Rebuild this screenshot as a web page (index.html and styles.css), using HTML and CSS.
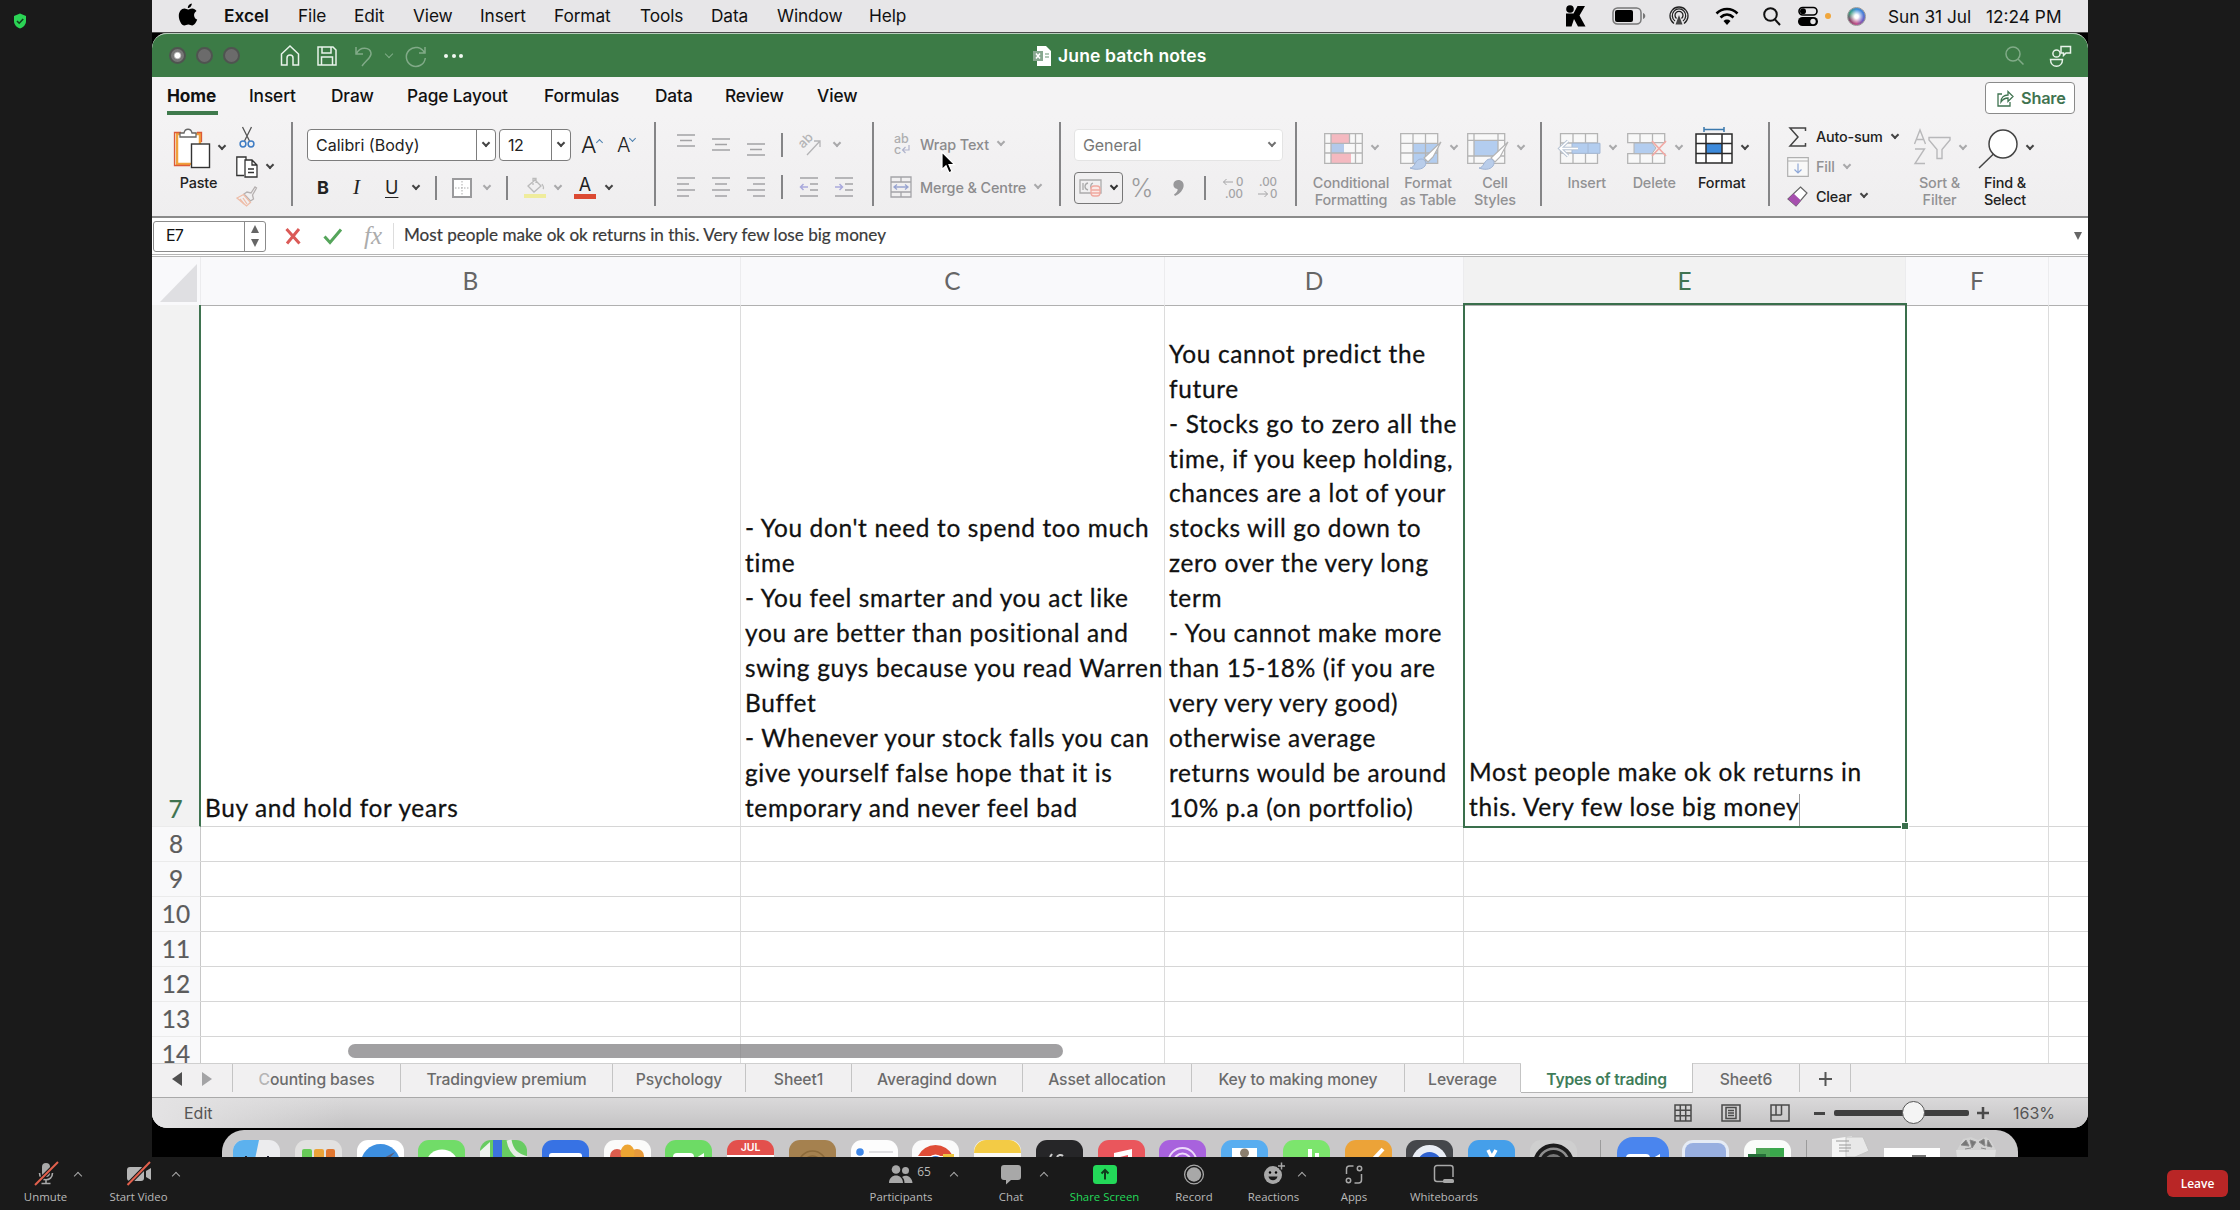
FILE: index.html
```
<!DOCTYPE html>
<html>
<head>
	<meta charset="utf-8">
	<title>June batch notes</title>
	<link rel="stylesheet" href="styles.css">
</head>
<body>
	<section class="stage">
		<svg class="shield" width="14" height="16" viewBox="0 0 14 16"><path d="M7 0.5L13 3v5c0 4-3 6.500-6 7.500C4 14.500 1 12 1 8V3z" fill="#2bd455"/><path d="M4 8l2.200 2.200L10.200 6" fill="none" stroke="#12401e" stroke-width="1.600"/></svg>

		<div class="screen">
			<!-- mac menu bar -->
			<div class="menubar">
				<div class="menus">
					<svg width="20" height="24" viewBox="0 0 20 24"><path d="M13.800 0.500c.2 2.200-1.700 4.600-3.900 4.500C9.600 2.900 11.700.7 13.800.5zM10 6.600c1.200 0 2.300-1.100 4.200-1.100 1.700 0 3.300.9 4.300 2.400-3.600 2.200-3 7.200.7 8.700-.9 2.500-2.900 5.900-5 5.900-1.500 0-2-.9-3.900-.9s-2.500.9-3.900.9C3.500 22.500.8 17 .8 12.900c0-4.200 2.600-7.300 5.600-7.300 1.500 0 2.500 1 3.600 1z"/></svg>
					<b>Excel</b><span>File</span><span>Edit</span><span>View</span><span>Insert</span><span>Format</span><span>Tools</span><span>Data</span><span>Window</span><span>Help</span>
				</div>
				<div class="status">
					<svg width="21" height="22" viewBox="0 0 21 22"><circle cx="5" cy="4" r="3.800"/><path d="M1 8.500h7.500L12.500 1H20l-5.500 9.500 6 11h-7.500L9 14l-2.500 7.500H1z"/></svg>
					<svg width="34" height="18" viewBox="0 0 34 18"><rect x="1" y="1" width="28" height="16" rx="4.500" fill="none" stroke="#777" stroke-width="1.500"/><rect x="3" y="3" width="18" height="12" rx="2"/><path d="M31 6c3 1 3 5 0 6z" fill="#777"/></svg>
					<svg width="20" height="22" viewBox="0 0 20 22" fill="none" stroke="#222" stroke-width="1.300"><path d="M5 18.500a9 9 0 1 1 10 0M6 16a6.700 6.700 0 1 1 8 0M7.500 13.500a4 4 0 1 1 5 0"/><path d="M10 10l3.500 9.500h-7z" fill="#444" stroke="none"/></svg>
					<svg width="24" height="19" viewBox="0 0 24 19" fill="none" stroke="#000" stroke-width="2.600"><path d="M1.500 6.500C7.500.5 16.500.5 22.500 6.500M5.500 10.500c4-3.800 9-3.800 13 0"/><path d="M8.500 14a5 5 0 0 1 7 0L12 18z" fill="#000" stroke="none"/></svg>
					<svg width="18" height="19" viewBox="0 0 18 19" fill="none" stroke="#111" stroke-width="2"><circle cx="7.500" cy="7.500" r="6.300"/><path d="M12 12.500l5 5.500"/></svg>
					<svg width="20" height="20" viewBox="0 0 20 20"><rect x="1" y="1.500" width="18" height="7.500" rx="3.700" fill="none" stroke="#000" stroke-width="1.600"/><circle cx="5" cy="5.200" r="3"/><rect x="0" y="11" width="20" height="9" rx="4.500"/><circle cx="15" cy="15.500" r="2.700" fill="#e7e6e8"/></svg>
					<i class="orange-dot"></i>
					<i class="siri"></i>
					<span>Sun 31 Jul</span><span>12:24 PM</span>
				</div>
			</div>

			<div class="window">
				<!-- title bar -->
				<div class="titlebar">
					<div class="quick">
						<i class="light on"></i><i class="light"></i><i class="light"></i>
						<svg class="q-home" width="20" height="21" viewBox="0 0 20 21"><path d="M1.500 9L10 1l8.500 8v11H13v-7a3 3 0 0 0-6 0v7H1.500z"/></svg>
						<svg class="q-save" width="20" height="20" viewBox="0 0 20 20"><path d="M1 1h15l3 3v15H1zM5 1v6h9V1M4.500 19v-8h11v8"/></svg>
						<svg class="q-undo dim" width="18" height="22" viewBox="0 0 18 22"><path d="M1 2v7h7M1.500 8.500C5 1 15 2 16 8c.7 4-3.500 6-9 13"/></svg>
						<i class="chev light-chev"></i>
						<svg class="q-redo dim" width="22" height="22" viewBox="0 0 22 22"><path d="M20 2v6h-6M19.500 8a9.500 9.500 0 1 0 .8 5"/></svg>
						<span class="dots"><i></i><i></i><i></i></span>
					</div>
					<div class="doc">
						<svg width="18" height="20" viewBox="0 0 18 20"><path d="M4 0h9l5 5v15H4z" fill="#fff"/><rect x="0" y="5" width="10" height="10" fill="#88a890"/><path d="M3 7.500l4 5M7 7.500l-4 5" stroke="#fff"/><path d="M12 8h4M12 11h4" stroke="#9ab8a2"/></svg>
						June batch notes
					</div>
					<div class="title-right">
						<svg class="dim" width="19" height="19" viewBox="0 0 19 19"><circle cx="8" cy="8" r="7"/><path d="M13 13l5.500 5.500"/></svg>
						<svg width="23" height="22" viewBox="0 0 23 22"><circle cx="7.500" cy="8.500" r="3.600"/><path d="M1.500 14.500h12c0 9-12 9-12 0zM12 1.500h9.500V8H17l-2.500 2.500V8H12z"/></svg>
					</div>
				</div>

				<!-- ribbon tabs -->
				<div class="tabs">
					<div class="tab-list">
						<span class="current">Home</span><span>Insert</span><span>Draw</span><span>Page Layout</span><span>Formulas</span><span>Data</span><span>Review</span><span>View</span>
					</div>
					<div class="share">
						<svg width="17" height="17" viewBox="0 0 17 17" fill="none" stroke="#3f7350" stroke-width="1.300"><path d="M5 4H1v12h12v-4M4 12c0-5 3-7 7-7V1.500l5 5-5 5V8c-3 0-5 1-7 4z"/></svg>
						Share
					</div>
				</div>

				<!-- ribbon -->
				<div class="ribbon">
					<div class="group clipboard">
						<div class="big paste">
							<div class="pic"><svg width="38" height="42" viewBox="0 0 38 42"><path d="M4 7h23v30H4z" fill="#fff" stroke="#f0a13c" stroke-width="2.500"/><path d="M8 5.500H1.500v33H17M24 5.500h4.500V15" fill="none" stroke="#dd5a37" stroke-width="1.300"/><path d="M7 10V6h4c1-5 7-5 8 0h4v4z" fill="#fff" stroke="#666" stroke-width="1.300"/><rect x="18.500" y="17" width="18" height="23.500" fill="#fff" stroke="#333" stroke-width="1.400"/></svg><i class="chev"></i></div>
							<p>Paste</p>
						</div>
						<div class="clips">
							<svg width="16" height="22" viewBox="0 0 16 22" fill="none"><path d="M3.500 1l7 14M12.500 1l-7 14" stroke="#555" stroke-width="1.300"/><circle cx="4" cy="18" r="2.900" stroke="#3f7dc4" stroke-width="1.500"/><circle cx="12" cy="18" r="2.900" stroke="#3f7dc4" stroke-width="1.500"/></svg>
							<div class="copy"><svg width="22" height="22" viewBox="0 0 22 22" fill="#fff" stroke="#333" stroke-width="1.300"><path d="M8 19.500H.8V1H10v3"/><path d="M9 4h7l5 5v12H9zM16 4v5h5M12 13h6M12 16.500h6"/></svg><i class="chev"></i></div>
							<svg width="21" height="21" viewBox="0 0 21 21" fill="none" stroke-width="1.300"><path d="M8 8l3-2 4 1 4-6 1.500 1-4 7 1 4-3 2z" stroke="#b5b0b0"/><path d="M7.500 8.500l7 8-4 3.500L1 12z" stroke="#eebda8"/><path d="M4 13l4 5M7 12l4 6" stroke="#eebda8"/></svg>
						</div>
					</div>

					<div class="group font">
						<div class="frow combos">
							<div class="combo name"><span>Calibri (Body)</span><i class="chev"></i></div>
							<div class="combo size"><span>12</span><i class="chev"></i></div>
							<span class="grow">A<i class="chev up"></i></span>
							<span class="grow small">A<i class="chev"></i></span>
						</div>
						<div class="frow styles">
							<b>B</b><em>I</em><u>U</u><i class="chev"></i><i class="bar"></i>
							<svg width="20" height="20" viewBox="0 0 20 20" fill="none"><rect x="1" y="1" width="18" height="18" fill="#fff" stroke="#9a9a9c" stroke-width="2"/><path d="M10 3v14M3 10h14" stroke="#aaa" stroke-dasharray="1.500 1.500"/></svg>
							<i class="chev off"></i><i class="bar"></i>
							<svg width="22" height="22" viewBox="0 0 22 22" fill="none" stroke="#bbb" stroke-width="1.300"><path d="M4 9l7-6 6 6-7 6zM9 8V1.500h3V6M18 7c2 3 2 4 1 5"/><path d="M0 19h22" stroke="#efec9c" stroke-width="4"/></svg>
							<i class="chev off"></i>
							<span class="fcolor">A</span><i class="chev"></i>
						</div>
					</div>

					<div class="group align">
						<div class="arow">
							<svg class="lines" width="20" height="22" viewBox="0 0 20 22"><path d="M1 1h18M4 6.500h12M1 12h18"/></svg>
							<svg class="lines" width="20" height="22" viewBox="0 0 20 22"><path d="M1 5h18M4 10.500h12M1 16h18"/></svg>
							<svg class="lines" width="20" height="22" viewBox="0 0 20 22"><path d="M1 10h18M4 15.500h12M1 21h18"/></svg>
							<i class="bar"></i>
							<svg width="24" height="22" viewBox="0 0 24 22" fill="none" stroke="#b4b4b6" stroke-width="1.300"><path d="M8 21L21 7M15 7h6v6"/><text x="4" y="15" transform="rotate(-45 4 15)" font-family="Inter, sans-serif" font-size="13" fill="#b4b4b6" stroke="none">ab</text></svg>
							<i class="chev off"></i>
						</div>
						<div class="arow second">
							<svg class="lines" width="20" height="20" viewBox="0 0 20 20"><path d="M1 1h18M1 7h12M1 13h18M1 19h12"/></svg>
							<svg class="lines" width="20" height="20" viewBox="0 0 20 20"><path d="M1 1h18M4 7h12M1 13h18M4 19h12"/></svg>
							<svg class="lines" width="20" height="20" viewBox="0 0 20 20"><path d="M1 1h18M7 7h12M1 13h18M7 19h12"/></svg>
							<i class="bar"></i>
							<svg class="lines" width="20" height="20" viewBox="0 0 20 20"><path d="M1 1h18M11 7h8M11 13h8M1 19h18"/><path d="M9 10H1.500M4.500 7l-3 3 3 3" stroke="#a9a9dc"/></svg>
							<svg class="lines" width="20" height="20" viewBox="0 0 20 20"><path d="M1 1h18M11 7h8M11 13h8M1 19h18"/><path d="M1 10h7.500M5.500 7l3 3-3 3" stroke="#a9a9dc"/></svg>
						</div>
					</div>

					<div class="group wrap">
						<div class="wrow">
							<svg width="22" height="22" viewBox="0 0 22 22"><g font-family="Inter, sans-serif" font-size="12.500" fill="#aeaeb0"><text x="4" y="10">ab</text><text x="4" y="21">c</text></g><path d="M19 12v5h-6M15.500 14l-3 3 3 3" fill="none" stroke="#b0b4cc" stroke-width="1.200"/></svg>
							<span>Wrap Text</span><i class="chev off"></i>
						</div>
						<div class="wrow second">
							<svg width="22" height="22" viewBox="0 0 22 22" fill="none" stroke="#a4a4a8" stroke-width="1.300"><path d="M1 1h20v20H1zM1 6h20M1 16h20M11 1v5M11 16v5"/><path d="M4 11h14M7 8.500L4 11l3 2.500M15 8.500l3 2.500-3 2.500" stroke="#98a4d0"/></svg>
							<span>Merge &amp; Centre</span><i class="chev off"></i>
						</div>
						<svg class="pointer" width="15" height="23" viewBox="0 0 15 23"><path d="M1 1v17.500l4-3.800 3 7 3-1.300-3-6.700h5.500z" stroke="#fff" stroke-width="1.200"/></svg>
					</div>

					<div class="group number">
						<div class="general"><span>General</span><i class="chev"></i></div>
						<div class="nrow">
							<div class="money"><svg width="24" height="20" viewBox="0 0 24 20" fill="none" stroke="#aaa" stroke-width="1.300"><path d="M1 2h21v13H1zM4 5v7M9 5c-4 1-4 6 0 7M14 5c-3 1-3 6 0 7"/><g stroke="#f0a9a0" fill="#fbe9e6"><rect x="12" y="8" width="9" height="10" rx="3"/><path d="M12 12h9M12 15h9"/></g></svg><i class="chev"></i></div>
							<span class="pct">%</span>
							<svg class="comma" width="11" height="16" viewBox="0 0 11 16"><path d="M5 0c8 0 8 11-3 16l-1-1.500c3-2 4-4 3.500-5.500C-1 9-1 0 5 0z" fill="#98989a"/></svg>
							<i class="bar"></i>
							<svg width="24" height="22" viewBox="0 0 24 22"><g font-family="Inter, sans-serif" font-size="11.500" fill="#a4a4a6"><text x="14" y="9">0</text><text x="3" y="21">.00</text></g><path d="M11 5H1.500M4.500 2l-3 3 3 3" fill="none" stroke="#a4a4a6"/></svg>
							<svg width="24" height="22" viewBox="0 0 24 22"><g font-family="Inter, sans-serif" font-size="11.500" fill="#a4a4a6"><text x="2" y="9">.00</text><text x="13" y="21">0</text></g><path d="M1 17h9.500M7.500 14l3 3-3 3" fill="none" stroke="#a4a4a6"/></svg>
						</div>
					</div>

					<div class="group formats">
						<div class="big off w84">
							<div class="pic"><svg width="39" height="31" viewBox="0 0 39 31"><rect x=".7" y=".7" width="37.600" height="29.600" fill="#f8f8f8"/><path d="M7 1h18v9H7zM7 20h20v10H7z" fill="#f4b9c0"/><path d="M7 10h13v10H7z" fill="#b3c9ea"/><path d="M.7.7h37.600v29.600H.7zM.7 10.300h37.600M.7 20h37.600M7 .7v29.600M31.500.7v29.600M25.500.7v9.600" fill="none" stroke="#b4b4b4" stroke-width="1.300"/></svg><i class="chev off"></i></div>
							<p>Conditional<br>Formatting</p>
						</div>
						<div class="big off w70">
							<div class="pic"><svg width="42" height="37" viewBox="0 0 42 37"><path d="M.7.700h37v29.600H.7z" fill="#f8f8f8"/><path d="M13 10.300h24.500v20H13z" fill="#b3cdef"/><path d="M.7.7h37v29.600H.7zM.7 10.300h37M.7 20h37M13 .7v29.600M25.500.7v29.600" fill="none" stroke="#b4b4b4" stroke-width="1.300"/><path d="M41 9L24 25l4 4 5-5z" fill="#fff" stroke="#b4b4b4" stroke-width="1.200"/><path d="M10 35c5 0 5-9 11-9 4 0 6 4 4 7-3 4-10 4-15 2z" fill="#b9cdea" stroke="#a0b4d4"/></svg><i class="chev off"></i></div>
							<p>Format<br>as Table</p>
						</div>
						<div class="big off w64">
							<div class="pic"><svg width="42" height="37" viewBox="0 0 42 37"><path d="M.7.700h37v29.600H.7z" fill="#f8f8f8"/><path d="M7 7.300h24v16H7z" fill="#b3cdef"/><path d="M.7.7h37v29.600H.7zM.7 7.300h37M.7 23h37M7 .7v29.600M31 .7v22" fill="none" stroke="#b4b4b4" stroke-width="1.300"/><path d="M41 9L24 25l4 4 5-5z" fill="#fff" stroke="#b4b4b4" stroke-width="1.200"/><path d="M12 35c5 0 5-9 11-9 4 0 5 4 3 7-3 4-9 4-14 2z" fill="#b9cdea" stroke="#a0b4d4"/></svg><i class="chev off"></i></div>
							<p>Cell<br>Styles</p>
						</div>
					</div>

					<div class="group cells">
						<div class="big off w68">
							<div class="pic"><svg width="43" height="31" viewBox="0 0 43 31"><path d="M2.500.7h37v29.600h-37zM15 .7v29.600M27.500.7v29.600M2.500 10h37M2.500 20h37" fill="#f8f8f8" stroke="#b4b4b4" stroke-width="1.300"/><path d="M14 10.300h28v10H14zM30 10.300v10" fill="#b3cdef" stroke="#a4b8d4"/><path d="M20 15.500H2M10 8l-8 7.500L10 23" fill="none" stroke="#b8c4d4" stroke-width="3.500"/><path d="M20 15.500H2M10 8l-8 7.500L10 23" fill="none" stroke="#fff" stroke-width="1.500"/></svg><i class="chev off"></i></div>
							<p>Insert</p>
						</div>
						<div class="big off w68">
							<div class="pic"><svg width="40" height="31" viewBox="0 0 40 31"><path d="M.7.7h37v9H.7zM.7 20.600h37v9.700H.7zM13 .7v9M25.500.7v9M13 20.600v9.700M25.500 20.600v9.700" fill="#f8f8f8" stroke="#b4b4b4" stroke-width="1.300"/><path d="M7 10h18l4 5-4 5.600H7z" fill="#b3cdef" stroke="#b4b4b4"/><path d="M25 8l14 15M39 8L25 23" stroke="#f3a9a4" stroke-width="1.700"/></svg><i class="chev off"></i></div>
							<p>Delete</p>
						</div>
						<div class="big w68">
							<div class="pic tall"><svg width="38" height="37" viewBox="0 0 38 37"><path d="M9 2.500h20M9 0v5M29 0v5" stroke="#3a78ad" stroke-width="1.500"/><path d="M1 7h36v29H1z" fill="#fff"/><path d="M11 16.500h16v10H11z" fill="#3d8adb"/><path d="M1 7h36v29H1zM1 16.500h36M1 26.500h36M11 7v29M27 7v29" fill="none" stroke="#2a2a2a" stroke-width="1.500"/></svg><i class="chev"></i></div>
							<p>Format</p>
						</div>
					</div>

					<div class="group editing">
						<div class="edits">
							<div><svg width="22" height="20" viewBox="0 0 22 20" fill="none" stroke="#444" stroke-width="1.500"><path d="M18.500 4V1H3l8 9-8 9h15.500v-3"/></svg><span>Auto-sum</span><i class="chev"></i></div>
							<div class="off"><svg width="22" height="20" viewBox="0 0 22 20" fill="#f8f8f8" stroke="#b0b0b0" stroke-width="1.200"><path d="M.7.7h20.600v18.600H.7zM.7 4h20.600"/><path d="M11 6.500V16M7.500 12.500L11 16l3.500-3.500" stroke="#8fa8d8" fill="none"/></svg><span>Fill</span><i class="chev off"></i></div>
							<div><svg width="22" height="21" viewBox="0 0 22 21"><path d="M13.500 1l6.500 6L9 20l-8-7z" fill="#fff" stroke="#666" stroke-width="1.200"/><path d="M6.500 7.500l7.500 7L9 20l-8-7z" fill="#a64fae"/></svg><span>Clear</span><i class="chev"></i></div>
						</div>
						<div class="big off w66">
							<div class="pic"><svg width="38" height="36" viewBox="0 0 38 36" fill="none" stroke="#b8b8ba" stroke-width="1.400"><path d="M1.500 15L7 1l5.500 14M3.500 10.500h7M2 20h9.500L2 34.500h10"/><path d="M16 8.500h21v2.500l-8 9.500v9h-5v-9L16 11z"/></svg><i class="chev off"></i></div>
							<p>Sort &amp;<br>Filter</p>
						</div>
						<div class="big w64">
							<div class="pic"><svg width="40" height="40" viewBox="0 0 40 40" stroke="#444" stroke-width="1.500"><circle cx="25" cy="15" r="14" fill="#fff"/><path d="M15.500 25L1 39"/></svg><i class="chev"></i></div>
							<p>Find &amp;<br>Select</p>
						</div>
					</div>
				</div>

				<!-- formula bar -->
				<div class="formula">
					<div class="namebox"><span>E7</span><div class="spin"><i class="tri-up"></i><i class="tri-down"></i></div></div>
					<svg class="f-no" width="16" height="18" viewBox="0 0 16 18"><path d="M1.500 2l13 14.500M14 2L2 16.500" stroke="#db5a57" stroke-width="3"/></svg>
					<svg class="f-yes" width="20" height="17" viewBox="0 0 20 17" fill="none"><path d="M1.500 8.500l5.500 6L18 1.500" stroke="#55a55b" stroke-width="3"/></svg>
					<em>fx</em>
					<p>Most people make ok ok returns in this. Very few lose big money</p>
					<i class="tri-down"></i>
				</div>

				<!-- sheet -->
				<div class="sheet">
					<div class="row head">
						<div class="num"><svg width="37" height="38" viewBox="0 0 37 38"><path d="M37 0v38H0z" fill="#dfdfe2"/></svg></div>
						<div>B</div><div>C</div><div>D</div><div class="sel">E</div><div>F</div><div></div>
					</div>
					<div class="row seven">
						<div class="num">7</div>
						<div>Buy and hold for years</div>
						<div>- You don't need to spend too much<br>time<br>- You feel smarter and you act like<br>you are better than positional and<br>swing guys because you read Warren<br>Buffet<br>- Whenever your stock falls you can<br>give yourself false hope that it is<br>temporary and never feel bad</div>
						<div>You cannot predict the<br>future<br>- Stocks go to zero all the<br>time, if you keep holding,<br>chances are a lot of your<br>stocks will go down to<br>zero over the very long<br>term<br>- You cannot make more<br>than 15-18% (if you are<br>very very very good)<br>otherwise average<br>returns would be around<br>10% p.a (on portfolio)</div>
						<div class="active"><span>Most people make ok ok returns in<br>this. Very few lose big money<i class="caret"></i></span><i class="handle"></i></div>
						<div></div><div></div>
					</div>
					<div class="row"><div class="num">8</div><div></div><div></div><div></div><div></div><div></div><div></div></div>
					<div class="row"><div class="num">9</div><div></div><div></div><div></div><div></div><div></div><div></div></div>
					<div class="row"><div class="num">10</div><div></div><div></div><div></div><div></div><div></div><div></div></div>
					<div class="row"><div class="num">11</div><div></div><div></div><div></div><div></div><div></div><div></div></div>
					<div class="row"><div class="num">12</div><div></div><div></div><div></div><div></div><div></div><div></div></div>
					<div class="row"><div class="num">13</div><div></div><div></div><div></div><div></div><div></div><div></div></div>
					<div class="row"><div class="num">14</div><div></div><div></div><div></div><div></div><div></div><div></div></div>
					<i class="scroll"></i>
				</div>

				<div class="sheets">
					<div class="arrows"><i class="tri-left"></i><i class="tri-right"></i></div>
					<span><i class="faded">C</i>ounting bases</span><span>Tradingview premium</span><span>Psychology</span><span>Sheet1</span><span>Averagind down</span><span>Asset allocation</span><span>Key to making money</span><span>Leverage</span><span class="on">Types of trading</span><span>Sheet6</span><span><svg width="13" height="14" viewBox="0 0 13 14"><path d="M6.500 0v14M0 7h13" stroke="#555" stroke-width="2"/></svg></span>
				</div>

				<div class="statusbar">
					<span class="mode">Edit</span>
					<svg width="18" height="18" viewBox="0 0 18 18"><path d="M1 1h16v16H1zM6.300 1v16M11.700 1v16M1 6.300h16M1 11.700h16"/></svg>
					<svg width="20" height="18" viewBox="0 0 20 18"><path d="M1 1h18v16H1zM5 3.500h10v11H5zM7 6.500h6M7 9h6M7 11.500h6"/></svg>
					<svg width="20" height="18" viewBox="0 0 20 18"><path d="M1 1h18v16H1zM1 11h10.500M6 1v10M11.500 1v10"/></svg>
					<div class="zoomer">
						<i class="minus"></i><div class="track"><i class="knob"></i></div>
						<svg width="12" height="12" viewBox="0 0 12 12"><path d="M6 0v12M0 6h12" stroke-width="2.500"/></svg>
					</div>
					<span class="percent">163%</span>
				</div>
			</div>

			<!-- dock, only the top of it shows -->
			<div class="dock">
				<svg class="app" viewBox="0 0 47 47"><rect width="47" height="47" rx="11" fill="#ececee"/><path d="M11 0h15l-5 24v23H11A11 11 0 0 1 0 36V11A11 11 0 0 1 11 0z" fill="#5cb1ee"/><path d="M13 16v6M35 16v6" stroke="#223" stroke-width="2"/></svg>
				<svg class="app" viewBox="0 0 47 47"><rect width="47" height="47" rx="11" fill="#e2e1e0"/><rect x="7" y="9" width="10" height="10" rx="2" fill="#67ca57"/><rect x="19" y="9" width="10" height="10" rx="2" fill="#eba338"/><rect x="31" y="9" width="9" height="10" rx="2" fill="#e0762f"/></svg>
				<svg class="app" viewBox="0 0 47 47"><rect width="47" height="47" rx="11" fill="#fff"/><circle cx="23.500" cy="23.500" r="19.500" fill="#3d8fe0"/><path d="M38 12L21 21l5 5z" fill="#5d6078"/></svg>
				<svg class="app" viewBox="0 0 47 47"><rect width="47" height="47" rx="11" fill="#71dc68"/><ellipse cx="24" cy="22" rx="15" ry="12.500" fill="#fff"/></svg>
				<svg class="app" viewBox="0 0 47 47"><rect width="47" height="47" rx="11" fill="#68cc62"/><path d="M0 11l10-9v45H0z" fill="#eef3ee"/><path d="M13 0h9v47h-9z" fill="#3d73dd"/><path d="M29 0c2 12 8 16 18 19" fill="none" stroke="#e6ebe5" stroke-width="5"/></svg>
				<svg class="app" viewBox="0 0 47 47"><rect width="47" height="47" rx="11" fill="#3772e4"/><rect x="7" y="13" width="33" height="20" rx="3" fill="#fff"/></svg>
				<svg class="app" viewBox="0 0 47 47"><rect width="47" height="47" rx="11" fill="#fbfbfa"/><circle cx="13" cy="16" r="7" fill="#dc5d4d"/><circle cx="33" cy="16" r="7" fill="#e79a3c"/><ellipse cx="23.500" cy="13" rx="7" ry="8.500" fill="#eda533"/></svg>
				<svg class="app" viewBox="0 0 47 47"><rect width="47" height="47" rx="11" fill="#6ddb65"/><rect x="8" y="13" width="21" height="20" rx="4" fill="#fff"/><path d="M31 18l8-5v20z" fill="#fff"/></svg>
				<div class="app cal">JUL</div>
				<svg class="app" viewBox="0 0 47 47"><rect width="47" height="47" rx="11" fill="#a5814f"/><circle cx="23.500" cy="25" r="14" fill="none" stroke="#8c6a3a" stroke-width="1.500"/><circle cx="23.500" cy="25" r="9" fill="none" stroke="#8c6a3a" stroke-width="1.500"/></svg>
				<svg class="app" viewBox="0 0 47 47"><rect width="47" height="47" rx="11" fill="#fdfdfd"/><circle cx="9" cy="12" r="3.800" fill="#3f87e8"/><path d="M18 12h24" stroke="#d5d5d8" stroke-width="1.500"/></svg>
				<svg class="app" viewBox="0 0 47 47"><rect width="47" height="47" rx="11" fill="#fafafa"/><path d="M6 16a19.500 19.500 0 0 1 35 0z" fill="#df4d37"/><path d="M31 14h11v8H31z" fill="#ecc540"/><circle cx="23.500" cy="23.500" r="9" fill="#fff"/><circle cx="23.500" cy="23" r="7" fill="#3f7fe0"/></svg>
				<svg class="app" viewBox="0 0 47 47"><rect width="47" height="47" rx="11" fill="#fbfaf6"/><path d="M0 13a12 13 0 0 1 12-13h23a12 13 0 0 1 12 13z" fill="#f3cb45"/></svg>
				<svg class="app" viewBox="0 0 47 47"><rect width="47" height="47" rx="11" fill="#262628"/><path d="M14 17l2-3M21 17c1-2 4-3 6-1" stroke="#ccc" stroke-width="2" fill="none"/></svg>
				<svg class="app" viewBox="0 0 47 47"><rect width="47" height="47" rx="11" fill="#ea565c"/><path d="M16 13l18-4v18l-4 2V15l-10 2.500V30l-4 2z" fill="#fff"/></svg>
				<svg class="app" viewBox="0 0 47 47"><rect width="47" height="47" rx="11" fill="#a862dd"/><circle cx="23.500" cy="22" r="14" fill="none" stroke="#ecd9fa" stroke-width="2"/><circle cx="23.500" cy="22" r="8.500" fill="none" stroke="#ecd9fa" stroke-width="2"/></svg>
				<svg class="app" viewBox="0 0 47 47"><rect width="47" height="47" rx="11" fill="#58adf0"/><path d="M11 8h25v25H11z" fill="#fff"/><circle cx="23.500" cy="13" r="4.500" fill="#8b7f6e"/></svg>
				<svg class="app" viewBox="0 0 47 47"><rect width="47" height="47" rx="11" fill="#7ce56d"/><path d="M27 9v10M34 13v8" stroke="#fff" stroke-width="4"/></svg>
				<svg class="app" viewBox="0 0 47 47"><rect width="47" height="47" rx="11" fill="#eca338"/><path d="M38 9L26 22" stroke="#fff" stroke-width="4"/></svg>
				<svg class="app" viewBox="0 0 47 47"><rect width="47" height="47" rx="11" fill="#45474b"/><circle cx="23.500" cy="23" r="18" fill="#e9edf5"/><circle cx="23.500" cy="24" r="12" fill="#2f62d0"/></svg>
				<svg class="app" viewBox="0 0 47 47"><rect width="47" height="47" rx="11" fill="#459fea"/><path d="M20 10l8 16M28 10l-9 16" stroke="#fff" stroke-width="3.500"/></svg>
				<svg class="app" viewBox="0 0 47 47"><rect width="47" height="47" rx="11" fill="#cfcfcf"/><circle cx="23.500" cy="24" r="18.500" fill="#8f8f8f" stroke="#1d1d1d" stroke-width="4"/><circle cx="23.500" cy="24" r="12" fill="#777" stroke="#1d1d1d" stroke-width="4"/></svg>
				<i class="dock-bar"></i>
				<svg class="app zoom-app" viewBox="0 0 52 52"><rect width="52" height="52" rx="16" fill="#4a85ee"/><rect x="9" y="17" width="24" height="18" rx="4" fill="#fff"/><path d="M36 21l7-4v18z" fill="#fff"/></svg>
				<svg class="app" viewBox="0 0 47 47"><rect width="47" height="47" rx="11" fill="#e6ecf5"/><rect x="3" y="3" width="41" height="41" rx="8" fill="#98afe0"/></svg>
				<svg class="app" viewBox="0 0 47 47"><rect width="47" height="47" rx="11" fill="#fafcfa"/><rect x="12" y="8" width="28" height="30" fill="#4fa457"/><rect x="4" y="14" width="18" height="20" fill="#256d38"/><path d="M26 8h14v8H26z" fill="#3aa84c"/></svg>
				<i class="dock-bar second"></i>
				<svg class="doc-pile" width="38" height="21" viewBox="0 0 38 21"><path d="M1 3l20-3v21H1z" fill="#f4f4f4"/><path d="M15 1h17l6 14-14 6h-9z" fill="#e8e8e8" stroke="#c4c4c4"/><path d="M5 5h13M8 9h12M8 12h12M8 15h10" stroke="#9a9a9a"/></svg>
				<svg class="min-win" width="56" height="9" viewBox="0 0 56 9"><path d="M0 0h56v9H0z" fill="#fdfdfd"/><path d="M28 8h14" stroke="#777" stroke-width="2"/></svg>
				<svg class="trash" width="42" height="21" viewBox="0 0 42 21"><path d="M1 14h40l-1 7H2z" fill="#dedede"/><path d="M2 14l6-11 8-2 7 3 8-3 5 4 5 9z" fill="#d2d2d2"/><path d="M6 9l5-5 3 6zM15 4l6 2-4 6zM24 6l5-3 1 7zM33 4l4 7-5-1zM10 13l6-1M26 12l5 1" fill="#777" stroke="#8a8a8a"/></svg>
			</div>
		</div>
	</section>

	<!-- meeting toolbar -->
	<footer>
		<div class="ctl mute"><svg width="24" height="25" viewBox="0 0 24 25"><rect x="8" y="2" width="8" height="14" rx="4" fill="#a9a9a9"/><path d="M5.500 12c0 9 13 9 13 0M12 18.500V22M7.500 22.500h9" fill="none" stroke="#a9a9a9" stroke-width="1.600"/><path d="M1 24L24 1" stroke="#1a1a1a" stroke-width="4"/><path d="M1 24L24 1" stroke="#e2604d" stroke-width="2"/></svg><p>Unmute</p></div>
		<i class="caret-up"></i>
		<div class="ctl video"><svg width="25" height="25" viewBox="0 0 25 25"><rect x="1" y="6" width="17" height="14" rx="3" fill="#b5b5b5"/><path d="M20 10l5-3v12l-5-3z" fill="#b5b5b5"/><path d="M1.500 24L24 1" stroke="#1a1a1a" stroke-width="4"/><path d="M1.500 24L24 1" stroke="#e2604d" stroke-width="2"/></svg><p>Start Video</p></div>
		<i class="caret-up"></i>
		<div class="ctl people"><div class="count"><svg width="25" height="25" viewBox="0 0 25 25" fill="#a8a8a8"><circle cx="8" cy="8.500" r="4.300"/><circle cx="17.500" cy="9.500" r="3.500"/><path d="M1 22c0-10 14-10 14 0zM16.500 22c0-3-1-5-2.500-6 4-3 10-.5 10.500 6z"/></svg><span>65</span></div><p>Participants</p></div>
		<i class="caret-up far"></i>
		<div class="ctl chat"><svg width="22" height="25" viewBox="0 0 22 25"><path d="M4 4h14a3 3 0 0 1 3 3v9a3 3 0 0 1-3 3h-7l-5 4.500V19H4a3 3 0 0 1-3-3V7a3 3 0 0 1 3-3z" fill="#a8a8a8"/></svg><p>Chat</p></div>
		<i class="caret-up near"></i>
		<div class="ctl sharing"><svg width="24" height="25" viewBox="0 0 24 25"><rect y="4" width="24" height="19" rx="3.500" fill="#23d959"/><path d="M12 18.500V9.500M8.500 12.500L12 9l3.500 3.500" fill="none" stroke="#10391c" stroke-width="2"/></svg><p>Share Screen</p></div>
		<div class="ctl record"><svg width="22" height="25" viewBox="0 0 22 25"><circle cx="11" cy="13.500" r="9.400" fill="none" stroke="#a8a8a8" stroke-width="1.300"/><circle cx="11" cy="13.500" r="7.200" fill="#a8a8a8"/></svg><p>Record</p></div>
		<div class="ctl react"><svg width="24" height="25" viewBox="0 0 24 25"><circle cx="11" cy="14" r="9" fill="#a8a8a8"/><path d="M6.500 15.500c1 5 8 5 9 0z" fill="#1a1a1a"/><circle cx="8" cy="11.500" r="1.200"/><circle cx="14" cy="11.500" r="1.200"/><path d="M19.500 1v8M15.500 5h8" stroke="#1a1a1a" stroke-width="4"/><path d="M19.500 1.500v7M16 5h7" stroke="#a8a8a8" stroke-width="1.500"/></svg><p>Reactions</p></div>
		<i class="caret-up"></i>
		<div class="ctl apps"><svg width="18" height="25" viewBox="0 0 18 25" fill="none" stroke="#a8a8a8" stroke-width="1.500"><path d="M1.500 13V8c0-2 1-3 3-3h4M16.500 13v6c0 2-1 3-3 3h-4"/><circle cx="14.500" cy="7.500" r="2.200"/><circle cx="3.500" cy="19.500" r="2.200"/></svg><p>Apps</p></div>
		<div class="ctl board"><svg width="22" height="25" viewBox="0 0 22 25"><path d="M11 20.500H4a2.500 2.500 0 0 1-2.500-2.500V7A2.500 2.500 0 0 1 4 4.500h13.500A2.500 2.500 0 0 1 20 7v9" fill="none" stroke="#a8a8a8" stroke-width="1.500"/><rect x="10" y="18" width="11" height="4" rx="1.500" fill="#a8a8a8"/></svg><p>Whiteboards</p></div>
		<button class="leave">Leave</button>
	</footer>
</body>
</html>
```
FILE: styles.css
```
html, body, div, section, footer, p{margin: 0;}
*{box-sizing: border-box;}

body{width: 2240px; height: 1210px; overflow: hidden;
		background: #1a1a1a;
		font-family: Inter, "Liberation Sans", sans-serif;
		color: #111;}
svg{display: block; flex: none; overflow: visible;}

.stage{height: 1157px; display: flex; overflow: hidden;}
.shield{margin: 13px 125px 0 13px;}
.screen{width: 1936px; height: 1157px;
		background: #000;
		overflow: hidden;}

/* menu bar */
.menubar{height: 33px;
		background: #e7e6e8;
		border-bottom: 1px solid #4b4b4b;
		display: flex; justify-content: space-between;
		font-size: 17.3px;
		line-height: 31px;}
.menus{display: grid;
		grid-template-columns: 46px 74px 56px 59px 67px 74px 86px 71px 66px 92px 60px;
		padding-left: 26px;}
.menus svg{margin-top: 3px;}
.menus b{font-weight: 600;}
.menus span{letter-spacing: -0.1px;}
.status{display: grid;
		grid-template-columns: 47px 57px 46px 48px 35px 27px 22px 41px 98px 102px;
		align-items: center;
		white-space: nowrap;}
.orange-dot{width: 6px; height: 6px; border-radius: 50%; background: #f0a63c;}
.siri{width: 19px; height: 19px;
		border-radius: 50%;
		border: 1px solid #999;
		background: radial-gradient(circle, #fff 15%, transparent 60%), conic-gradient(#3a8fd8, #4a7fd8, #6b5fc4, #c0508a, #8a4a6c, #3f9d7d, #3a8fd8);}

/* window */
.window{height: 1095px;
		border-radius: 15px;
		background: #f4f3f4;
		overflow: hidden;}

.titlebar{height: 44px;
		background: #3c7b46;
		border-top: 1px solid #b9cfbd;
		border-radius: 15px 15px 0 0;
		display: grid;
		grid-template-columns: 881px 1fr 102px;
		align-items: center;}
.titlebar svg{fill: none; stroke: #e8f3ea; stroke-width: 1.5;}
.titlebar .dim{opacity: .4;}
.quick{display: flex; align-items: center; padding-left: 17px;}
.light{width: 17px; height: 17px;
		margin-right: 10px;
		border-radius: 50%;
		background: #6b6b6b;
		border: 2px solid #4f5450;}
.light.on{background: radial-gradient(circle, #fff 25%, #777 45%);}
.quick .q-home{margin-left: 30px;}
.quick .q-save{margin-left: 17px;}
.quick .q-undo{margin-left: 18px;}
.quick .q-redo{margin-left: 13px;}
.dots{display: flex; gap: 3.500px; margin-left: 17px;}
.dots i{width: 4px; height: 4px; border-radius: 50%; background: #f2f8f3;}
.doc{display: flex; align-items: center; gap: 7px;
		color: #fff;
		font-size: 17.5px;
		font-weight: 600;
		letter-spacing: 0.15px;}
.titlebar .doc svg{stroke: none;}
.title-right{display: flex; align-items: center; gap: 25px; padding-left: 19px;}

/* small chevrons used all over the ribbon */
.chev{flex: none;
		width: 6px; height: 6px;
		border: solid #444;
		border-width: 0 2px 2px 0;
		transform: translateY(-2px) rotate(45deg);}
.chev.off{border-color: #a9a9ab;}
.chev.light-chev{border-color: #7fac87; margin-left: 13px; border-width: 0 1.500px 1.500px 0;}
.bar{width: 2px; height: 24px; background: #858587;}

.tabs{height: 39px;
		display: flex; justify-content: space-between;
		font-size: 17.3px;
		font-weight: 500;}
.tab-list{display: grid;
		grid-template-columns: 82px 82px 76px 137px 111px 70px 92px 60px;
		padding-left: 15px;
		line-height: 38px;
		letter-spacing: -0.1px;
		white-space: nowrap;}
.tab-list .current{font-weight: 700;
		width: 51px; height: 38px;
		border-bottom: 4px solid #3f7a4c;}
.share{display: flex; align-items: center; gap: 7px;
		width: 90px; height: 32px;
		margin: 5px 13px 0 0;
		padding-left: 11px;
		background: #fff;
		border: 1px solid #8a8a8a;
		border-radius: 4px;
		color: #3f7350;
		font-size: 16.300px;
		font-weight: 600;
		letter-spacing: -0.200px;}

/* ribbon */
.ribbon{height: 102px;
		padding-top: 6px;
		border-bottom: 2px solid #8b8b8b;
		background: linear-gradient(#f4f3f4, #efeeef);
		display: flex;
		font-size: 14.4px;
		font-weight: 500;
		color: #222;}
.group{height: 84px; border-right: 2px solid #858587; flex: none;}
.off{color: #929294;}
.clipboard{width: 141px; display: flex; padding-left: 17px;}
.font{width: 363px; padding: 7px 0 0 14px;}
.align{width: 218px; padding: 7px 0 0 20px;}
.wrap{width: 187px; padding: 11px 0 0 16px; position: relative;}
.number{width: 236px; padding: 7px 0 0 13px;}
.formats{width: 245px; display: flex; padding-left: 12px;}
.cells{width: 228px; display: flex; padding-left: 11px;}
.editing{width: 318px; display: flex; padding-left: 17px; border-right: none;}

.big{text-align: center; letter-spacing: -0.15px; line-height: 16.500px; white-space: nowrap;}
.big .pic{height: 53px;
		display: flex; justify-content: center; align-items: flex-start;
		gap: 9px;
		padding-top: 11px;}
.big .pic .chev{margin-top: 12px;}
.big .pic.tall{padding-top: 5px;}
.big .pic.tall .chev{margin-top: 18px;}
.w84{width: 84px;} .w70{width: 70px;} .w68{width: 67.500px;} .w66{width: 67px;} .w64{width: 64px;}
.paste{width: 59px;}
.paste .pic{padding-top: 5px; gap: 8px;}
.paste .pic .chev{margin-top: 18px;}
.editing .pic{padding-top: 7px;}
.editing .pic .chev{margin-top: 16px;}
.clips{display: flex; flex-direction: column; gap: 8px; padding: 4px 0 0 8px;}
.clips > svg:first-child{margin-left: 3px;}
.copy{display: flex; align-items: center; gap: 9px;}

.combos{display: flex; height: 32px;}
.combo{display: flex; align-items: center;
		background: #fff;
		border: 1px solid #7d7d7d;
		border-radius: 4px;
		font-size: 16px;
		font-weight: 400;}
.combo span{flex: 1; height: 30px; line-height: 30px; padding-left: 8px; border-right: 1px solid #7d7d7d;}
.combo .chev{margin: 0 6px;}
.combo.name{width: 189px;}
.combo.size{width: 72px; margin-left: 3px; letter-spacing: -0.5px;}
.grow{display: flex; margin-left: 10px; font-size: 23px; font-weight: 300; line-height: 32px; width: 36px;}
.grow .chev{width: 5px; height: 5px; border-color: #4b7fae; border-width: 0 1.500px 1.500px 0; margin-top: 9px;}
.grow .chev.up{transform: rotate(225deg); margin-top: 11px;}
.grow.small{font-size: 20px; margin-left: 0; line-height: 32px;}

.styles{display: grid;
		grid-template-columns: 36px 32px 28px 22px 17px 32px 22px 18px 31px 19px 32px 10px;
		align-items: center;
		height: 24px;
		margin-top: 14px;
		padding-left: 10px;
		font-size: 18px;}
.styles b{font-weight: 700;}
.styles em{font-family: "Liberation Serif", serif; font-size: 21px; font-weight: 400;}
.styles u{font-weight: 400; text-underline-offset: 3px;}
.styles .fcolor{width: 22px; height: 23px;
		font-weight: 400;
		line-height: 17px; text-align: center;
		border-bottom: 5px solid #dc4a32;}

.arow{display: grid;
		grid-template-columns: 35px 35px 35px 18px 35px 20px;
		align-items: center;
		height: 32px;}
.arow.second{height: 24px; margin-top: 14px;}
.lines{fill: none; stroke: #a3a3a5; stroke-width: 1.500;}

.wrow{display: flex; align-items: center; height: 22px; color: #8b8b8d; letter-spacing: -0.1px;}
.wrow.second{margin-top: 21px; height: 22px;}
.wrow span{margin: 0 9px 0 8px; white-space: nowrap;}
.pointer{position: absolute; left: 67px; top: 29px;}

.general{display: flex; justify-content: space-between; align-items: center;
		width: 209px; height: 32px;
		padding: 0 7px 0 8px;
		background: #fff;
		border: 1px solid #e4e4e4;
		border-radius: 4px;
		color: #777;
		font-size: 16px;
		font-weight: 400;
		letter-spacing: -0.1px;}
.general .chev{border-color: #707070;}
.nrow{display: flex; align-items: center; height: 32px; margin-top: 11px; color: #9b9b9d;}
.money{display: flex; align-items: center;
		width: 49px; height: 32px;
		border: 1.500px solid #777;
		border-radius: 4px;}
.money svg{margin: 0 4px;}
.money .chev{box-sizing: content-box; width: 4px; height: 4px; margin-left: 4px; border-color: #333;}
.money svg + .chev{box-shadow: none;}
.pct{width: 40px; margin-left: 7px; font-size: 25px; font-weight: 300;}
.nrow .comma{margin: 0 20px 0 3px;}
.nrow .bar{margin-right: 16px;}
.nrow > svg{margin-right: 11px;}

.edits{width: 119px; white-space: nowrap; letter-spacing: -0.2px;}
.edits div{display: flex; align-items: center; height: 29.700px;}
.edits span{margin: 0 9px 0 7px;}

/* formula bar */
.formula{height: 36px;
		background: #fff;
		display: flex; align-items: center;}
.namebox{display: flex;
		width: 113px; height: 31px;
		margin-left: 1px;
		border: 1.500px solid #8b8b8b;
		border-radius: 3px;
		font-size: 16px;
		line-height: 27px;
		letter-spacing: -0.8px;}
.namebox span{flex: 1; padding-left: 12px; border-right: 1.500px solid #8b8b8b;}
.spin{width: 20px; display: flex; flex-direction: column; align-items: center; justify-content: center; gap: 6px;}
.tri-up, .tri-down{border: solid transparent; border-width: 0 4.500px;}
.tri-up{border-bottom: 8px solid #666;}
.tri-down{border-top: 8px solid #666;}
.f-no{margin-left: 19px;}
.f-yes{margin-left: 22px;}
.formula em{width: 30px; margin-left: 21px; border-right: 1px solid #ddd;
		font-family: "Liberation Serif", serif;
		font-size: 25px;
		line-height: 26px;
		color: #acacac;}
.formula p{flex: 1; padding-left: 10px;
		font-family: Lato, "Open Sans", sans-serif;
		font-size: 17.100px;
		line-height: 32px;
		padding-bottom: 2px;
		color: #3a3a3a;
		-webkit-text-stroke: 0.2px #3a3a3a;}
.formula > .tri-down{margin-right: 6px;}

/* grid */
.sheet{position: relative;
		height: 809px;
		overflow: hidden;
		background: #fff;
		border-top: 3px double #b5b5b5;
		font-family: Lato, "Open Sans", sans-serif;
		font-size: 24.400px;
		letter-spacing: 0.670px;
		line-height: 34.950px;}
.row{display: grid;
		grid-template-columns: 49px 540px 424px 299px 442px 143px 1fr;
		height: 35px;}
.row > div{border-right: 1.500px solid #dcdcdc; border-bottom: 1.500px solid #d6d6d6; white-space: nowrap;}
.row > div:last-child{border-right: none;}
.row .num{background: #f9f9fa; color: #5c5c5c; text-align: center; letter-spacing: 0; line-height: 34px; border-right-color: #c8c8c8; border-bottom-color: #ebebeb; -webkit-text-stroke: 0.2px;}
.row.head{height: 48px;}
.row.head > div{background: #f9f9fb; color: #666;
		text-align: center;
		line-height: 48px;
		letter-spacing: 0;
		border-color: #ececee;
		border-bottom: 1.500px solid #b0b0b0;}
.row.head .num{padding: 7px 0 0 8px;}
.row.head .sel{background: #f2f2f2; color: #3f7350;}
.row.seven{height: 522px; -webkit-text-stroke: 0.3px;}
.row.seven > div{display: flex; align-items: flex-end; padding-left: 4px;}
.row.seven .num{justify-content: center; padding: 0; background: #f2f2f2; color: #3f7350; border-right: 2px solid #3f7350;}
.row.seven .active{position: relative;
		margin: -2px -1px -1px -1px;
		border: 2.500px solid #3a6f4c;}
.caret{display: inline-block; width: 1px; height: 32px; background: #999; vertical-align: middle;}
.handle{position: absolute; right: -4px; bottom: -4px; width: 8px; height: 8px; background: #3a6f4c; border: 1px solid #fff;}
.scroll{position: absolute; left: 196px; bottom: 5px;
		width: 715px; height: 14px;
		border-radius: 7px;
		background: rgba(130, 128, 131, .75);}

/* sheet tabs */
.sheets{height: 35px;
		background: #f1f0f1;
		border-top: 1px solid #cfcfcf;
		border-bottom: 1px solid #a9a9a9;
		display: grid;
		grid-template-columns: 81px 168px 212px 133px 106px 171px 169px 213px 116px 172px 107px 51px;
		font-size: 15.700px;
		font-weight: 500;
		letter-spacing: -0.100px;
		color: #6b6b6b;}
.sheets > *{display: flex; align-items: center; justify-content: center;
		height: 28px;
		padding-top: 2px;
		border-right: 1px solid #c4c4c4;
		white-space: nowrap;}
.sheets .on{background: #fff; color: #3f7d5a; font-weight: 600; margin-top: -1px; height: 30px; padding-top: 3px; border-bottom: 1px solid #b5b5b5; letter-spacing: -0.2px;}
.faded{font-style: normal; color: #b5b5b5;}
.sheets .arrows{justify-content: flex-start; padding-left: 20px; gap: 20px;}
.tri-left, .tri-right{border: solid transparent; border-width: 7px 0;}
.tri-left{border-right: 10px solid #4f4f4f;}
.tri-right{border-left: 10px solid #a3a3a5;}

.statusbar{height: 30px;
		background: linear-gradient(90deg, #e4e3e4, rgba(228, 227, 228, 0) 10%), linear-gradient(#dad9da, #c4c3c4);
		display: flex; align-items: center;
		font-size: 16px;
		color: #555;}
.statusbar svg{fill: none; stroke: #4a4a4a; stroke-width: 1.500; margin-right: 29px;}
.mode{width: 1522px; padding-left: 32px;}
.zoomer{display: flex; align-items: center; margin-left: -5px;}
.zoomer svg{margin: 0;}
.minus{width: 11px; height: 3px; background: #444; margin-right: 9px;}
.track{position: relative; width: 135px; height: 6px; margin-right: 8px; border-radius: 2px; background: #3f3f3f;}
.knob{position: absolute; left: 68px; top: -9px;
		width: 23px; height: 23px;
		border-radius: 50%;
		border: 1px solid #555;
		background: #f4f4f4;}
.percent{margin-left: 24px;}

/* dock */
.dock{width: 1796px; height: 60px;
		margin: 2px 0 0 70px;
		padding: 10px 0 0 11px;
		border-radius: 22px 22px 0 0;
		background: #c9c8c9;
		display: flex; align-items: flex-start;
		gap: 14.750px;}
.app{width: 47px; height: 47px; flex: none;}
.cal{border-radius: 11px;
		background: linear-gradient(#e3504c 15px, #fff 15px);
		color: #fff;
		font-size: 10.500px;
		font-weight: 600;
		line-height: 16px;
		text-align: center;}
.dock-bar{width: 1px; height: 40px; margin-left: 8px; background: #9b9b9b;}
.zoom-app{width: 52px; height: 52px; margin: -3px -2px 0 2px;}
.dock-bar.second{margin: 0;}
.second + .doc-pile{margin: -4px 0 0 10px;}
.min-win{margin-top: 8px;}
.trash{margin-top: -4px;}

/* meeting controls */
footer{height: 53px;
		display: flex;
		background: #1a1a1a;
		font-family: "Open Sans", "Noto Sans", sans-serif;
		font-size: 11.400px;
		color: #b9b9b9;}
.ctl{display: flex; flex-direction: column; align-items: center;
		padding-top: 4px;
		white-space: nowrap;}
.ctl p{line-height: 16px; margin-top: 3px;}
.mute{width: 55px; margin-left: 18px;}
.video{width: 65px; margin-left: 23px;}
.people{width: 66px; margin-left: 687px;}
.count{display: flex; line-height: 22px; gap: 4px; padding-left: 17px; font-size: 12px;}
.chat{width: 40px; margin-left: 32px;}
.sharing{width: 71px; margin-left: 20px; color: #23d959;}
.record{width: 40px; margin-left: 34px;}
.react{width: 47px; margin-left: 36px;}
.apps{width: 30px; margin-left: 32px;}
.board{width: 68px; margin-left: 41px;}
.caret-up{width: 6px; height: 6px;
		margin: 16px 2px 0;
		border: solid #a8a8a8;
		border-width: 1.500px 0 0 1.500px;
		transform: rotate(45deg);}
.caret-up.far{margin-left: 17px;}
.caret-up.near{margin-left: 10px;}
.leave{width: 61px; height: 27px;
		margin: 13px 12px 0 auto;
		padding: 0;
		border: none;
		border-radius: 6px;
		background: #b92626;
		color: #fff;
		font: 600 12px "Open Sans", "Noto Sans", sans-serif;}
```
